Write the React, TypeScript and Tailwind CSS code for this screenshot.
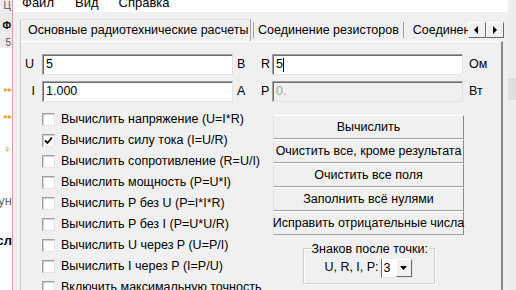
import React from "react";

const sans = "font-['Liberation_Sans',Arial,sans-serif]";

const checks = [
	{ label: "Вычислить напряжение (U=I*R)", on: false },
	{ label: "Вычислить силу тока (I=U/R)", on: true },
	{ label: "Вычислить сопротивление (R=U/I)", on: false },
	{ label: "Вычислить мощность (P=U*I)", on: false },
	{ label: "Вычислить P без U (P=I*I*R)", on: false },
	{ label: "Вычислить P без I (P=U*U/R)", on: false },
	{ label: "Вычислить U через P (U=P/I)", on: false },
	{ label: "Вычислить I через P (I=P/U)", on: false },
	{ label: "Включить максимальную точность", on: false },
];

const buttons = [
	"Вычислить",
	"Очистить все, кроме результата",
	"Очистить все поля",
	"Заполнить всё нулями",
	"Исправить отрицательные числа",
];

function Field({ value, disabled, caret }: { value: string; disabled?: boolean; caret?: boolean }) {
	return (
		<div
			className={`w-[191px] h-[21px] flex items-center pl-[3px] border border-[#a0a0a0] border-b-[#e3e3e3] border-r-[#e3e3e3] shadow-[inset_1px_1px_0_#6d6d6d] ${
				disabled ? "bg-[#f0f0f0] text-[#a0a0a0]" : "bg-white text-black"
			}`}
		>
			<span>{value}</span>
			{caret && <span className="w-px h-[14px] bg-black" />}
		</div>
	);
}

function Check({ on }: { on: boolean }) {
	return (
		<div className="w-[13px] h-[13px] shrink-0 bg-white border border-[#a0a0a0] border-b-[#e3e3e3] border-r-[#e3e3e3] shadow-[inset_1px_1px_0_#d0d0d0] flex items-center justify-center">
			{on && (
				<svg width="9" height="9" viewBox="0 0 9 9">
					<path d="M1 4.5 L3.5 7 L8 1.5" stroke="#000" strokeWidth="1.8" fill="none" />
				</svg>
			)}
		</div>
	);
}

function Arrow({ dir }: { dir: "l" | "r" }) {
	return (
		<div className="w-[18px] h-[16px] shrink-0 flex items-center justify-center bg-[#f0f0f0] border border-t-white border-l-white border-r-[#696969] border-b-[#696969]">
			<svg width="5" height="8" viewBox="0 0 5 8">
				{dir === "l" ? <path d="M4 0 L0 4 L4 8 Z" fill="#000" /> : <path d="M1 0 L5 4 L1 8 Z" fill="#000" />}
			</svg>
		</div>
	);
}

export default function App() {
	return (
		<div className={`w-[516px] h-[290px] overflow-hidden flex bg-white text-[12.5px] text-black ${sans}`}>
			{/* sliver of the window behind */}
			<div className="w-[12px] shrink-0 flex flex-col overflow-hidden">
				<div className="h-[48px] bg-[#ebebeb] flex flex-col items-end pr-[1px] text-[10px] leading-[10px] text-[#555]">
					<span className="mt-[1px]">Ц</span>
					<span className="mt-[10px] font-bold text-black">Ф</span>
					<span className="mt-[7px]">5</span>
				</div>
				<div className="flex flex-col items-end text-[#e8a030] text-[8px] leading-[10px]">
					<span className="mt-[37px]">▸▸</span>
					<span className="mt-[17px]">▸▸</span>
					<span className="mt-[21px] pr-[3px]">ᵩ</span>
				</div>
				<div className="flex flex-col items-end whitespace-nowrap text-[13px] leading-[15px]">
					<span className="mt-[40px] text-[#666]">сун</span>
					<span className="mt-[25px] font-bold">осл</span>
				</div>
			</div>
			<div className="w-px shrink-0 bg-[#e39aa3]" />

			{/* application window */}
			<div className="w-[495px] shrink-0 flex flex-col bg-[#f0f0f0]">
				<div className="h-[12px] shrink-0 bg-white overflow-hidden">
					<div className="-mt-[5px] flex pl-[9px] text-[13px] leading-[15px]">
						<span>Файл</span>
						<span className="ml-[21px]">Вид</span>
						<span className="ml-[20px]">Справка</span>
					</div>
				</div>

				<div className="ml-[7px] w-[483px] flex flex-col flex-1 whitespace-nowrap">
					{/* tabs */}
					<div className="h-[29px] shrink-0 flex items-end">
						<div className="w-[231px] h-[22px] shrink-0 border-l border-t border-r border-l-[#c8c8c8] border-t-[#e0e0e0] border-r-[#a0a0a0] flex items-center pl-[7px]">
							Основные радиотехнические расчеты
						</div>
						<div className="h-[22px] flex items-center">
							<div className="w-px h-[16px] bg-[#a0a0a0] ml-[2px]" />
							<span className="px-[4px]">Соединение резисторов</span>
							<div className="w-px h-[16px] bg-[#a0a0a0]" />
							<span className="pl-[9px] w-[64px] overflow-hidden">Соединение конденсаторов</span>
							<Arrow dir="l" />
							<Arrow dir="r" />
						</div>
					</div>

					{/* page */}
					<div className="flex-1 border-l border-t border-l-[#c8c8c8] border-t-white border-r-2 border-r-[#8a8a8a] flex flex-col">
						<div className="mt-[12px] flex items-center h-[21px]">
							<span className="w-[21px] text-right pr-[8px]">U</span>
							<Field value="5" />
							<span className="w-[28px] pl-[4px]">В</span>
							<span className="w-[11px]">R</span>
							<Field value="5" caret />
							<span className="pl-[6px]">Ом</span>
						</div>
						<div className="mt-[6px] flex items-center h-[21px]">
							<span className="w-[21px] text-right pr-[7px]">I</span>
							<Field value="1.000" />
							<span className="w-[28px] pl-[4px]">А</span>
							<span className="w-[11px]">P</span>
							<Field value="0." disabled />
							<span className="pl-[6px]">Вт</span>
						</div>

						<div className="mt-[7px] flex">
							<div className="ml-[21px] w-[231px] flex flex-col">
								{checks.map((c) => (
									<div key={c.label} className="h-[21px] flex items-center gap-[6px]">
										<Check on={c.on} />
										<span>{c.label}</span>
									</div>
								))}
							</div>

							<div className="w-[191px] mt-[6px] flex flex-col">
								{buttons.map((b) => (
									<div
										key={b}
										className="h-[24px] flex items-center justify-center bg-[#f0f0f0] border border-t-white border-l-[#e3e3e3] border-r-[#8a8a8a] border-b-[#a0a0a0]"
									>
										{b}
									</div>
								))}

								<div className="relative mx-auto mt-[13px] w-[132px] h-[36px] border border-[#d0d0d0] shadow-[inset_1px_1px_0_#fff,1px_1px_0_#fff] flex items-center justify-center gap-[2px] pt-[3px]">
									<span className="absolute -top-[9px] left-[8px] bg-[#f0f0f0] pr-[1px]">Знаков после точки:</span>
									<span>U, R, I, P:</span>
									<div className="h-[20px] flex border border-[#6d6d6d] border-b-[#e3e3e3] border-r-[#e3e3e3] bg-white">
										<span className="w-[14px] pl-[2px] leading-[18px]">3</span>
										<div className="w-[16px] h-[18px] bg-[#f0f0f0] border border-t-white border-l-white border-r-[#696969] border-b-[#696969] flex items-center justify-center">
											<svg width="7" height="4" viewBox="0 0 7 4">
												<path d="M0 0 L7 0 L3.5 4 Z" fill="#000" />
											</svg>
										</div>
									</div>
								</div>
							</div>
						</div>
					</div>
				</div>
			</div>

			{/* neighbouring window edge */}
			<div className="flex-1 bg-[#ededed] flex flex-col">
				<div className="mt-[78px] h-[22px] bg-[#dedede]" />
			</div>
		</div>
	);
}
